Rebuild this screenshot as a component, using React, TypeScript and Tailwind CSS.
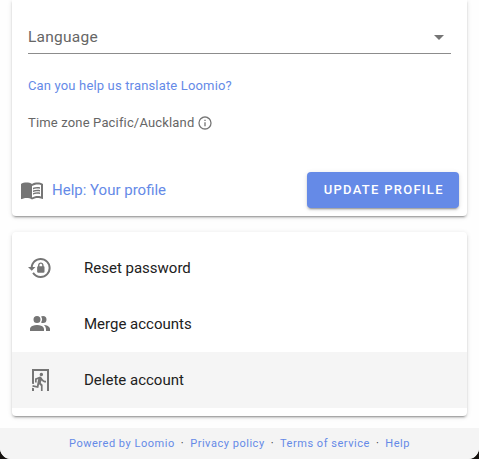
import React from "react";
import { MdMenuBook } from "react-icons/md";

function Icon({ d, className = "size-6" }: { d: string; className?: string }) {
  return (
    <svg viewBox="0 0 24 24" fill="currentColor" className={`shrink-0 ${className}`} aria-hidden="true">
      <path d={d} />
    </svg>
  );
}

const icons = {
  info: "M11,9H13V7H11M12,20C7.59,20 4,16.41 4,12C4,7.59 7.59,4 12,4C16.41,4 20,7.59 20,12C20,16.41 16.41,20 12,20M12,2A10,10 0 0,0 2,12A10,10 0 0,0 12,22A10,10 0 0,0 22,12A10,10 0 0,0 12,2M11,17H13V11H11V17Z",
  lockReset:
    "M12.63,2C18.16,2 22.64,6.5 22.64,12C22.64,17.5 18.16,22 12.63,22C9.12,22 6.05,20.18 4.26,17.43L5.84,16.18C7.25,18.47 9.76,20 12.64,20A8,8 0 0,0 20.64,12A8,8 0 0,0 12.64,4C8.56,4 5.2,7.06 4.71,11H7.47L3.73,14.73L0,11H2.69C3.19,5.95 7.45,2 12.63,2M15.59,10.24C16.09,10.25 16.5,10.65 16.5,11.16V15.77C16.5,16.27 16.09,16.69 15.58,16.69H10.05C9.54,16.69 9.13,16.27 9.13,15.77V11.16C9.13,10.65 9.54,10.25 10.04,10.24V9.23C10.04,7.7 11.29,6.46 12.81,6.46C14.34,6.46 15.59,7.7 15.59,9.23V10.24M12.81,7.86C12.06,7.86 11.44,8.47 11.44,9.23V10.24H14.19V9.23C14.19,8.47 13.57,7.86 12.81,7.86Z",
  accounts:
    "M16 17V19H2V17S2 13 9 13 16 17 16 17M12.5 7.5A3.5 3.5 0 1 0 9 11A3.5 3.5 0 0 0 12.5 7.5M15.94 13A5.32 5.32 0 0 1 18 17V19H22V17S22 13.37 15.94 13M15 4A3.39 3.39 0 0 0 13.07 4.59A5 5 0 0 1 13.07 10.41A3.39 3.39 0 0 0 15 11A3.5 3.5 0 0 0 15 4Z",
  exitRun:
    "M13.34,8.17C12.41,8.17 11.65,7.4 11.65,6.47A1.69,1.69 0 0,1 13.34,4.78C14.28,4.78 15.04,5.54 15.04,6.47C15.04,7.4 14.28,8.17 13.34,8.17M10.3,19.93L4.37,18.75L4.71,17.05L8.86,17.9L10.21,11.04L8.69,11.64V14.5H7V10.54L11.4,8.67L12.07,8.59C12.67,8.59 13.17,8.93 13.5,9.44L14.36,10.79C15.04,12 16.39,12.82 18,12.82V14.5C16.14,14.5 14.44,13.67 13.34,12.4L12.84,14.94L14.61,16.63V23H12.92V17.9L11.14,16.21L10.3,19.93M21,23H19V3H6V16.11L4,15.69V1H21V23M6,23H4V19.78L6,20.2V23Z",
};

const actions = [
  { label: "Reset password", icon: icons.lockReset, active: false },
  { label: "Merge accounts", icon: icons.accounts, active: false },
  { label: "Delete account", icon: icons.exitRun, active: true },
];

const links = ["Powered by Loomio", "Privacy policy", "Terms of service", "Help"];

const elevation =
  "shadow-[0_3px_1px_-2px_rgba(0,0,0,0.2),0_2px_2px_0_rgba(0,0,0,0.14),0_1px_5px_0_rgba(0,0,0,0.12)]";

export default function App() {
  return (
    <div className="h-[459px] w-[479px] overflow-hidden bg-[#15120f] font-[Roboto,sans-serif]">
      <div className="flex h-full flex-col overflow-hidden rounded-b-[11px] bg-[#fefefe]">
        <section className={`mx-3 flex h-[216px] shrink-0 flex-col rounded-b bg-white ${elevation}`}>
          <div className="mx-4 flex h-[54px] shrink-0 items-end justify-between border-b border-[#8c8c8c] pb-1">
            <span className="text-[15.5px] leading-6 tracking-[0.25px] text-[#666]">Language</span>
            <Icon d="M7,10L12,15L17,10H7Z" className="size-6 text-[#757575]" />
          </div>
          <a className="mx-4 mt-[21px] text-[13px] leading-5 tracking-[0.16px] text-[#658ae7]">
            <span className="relative top-px">Can you help us translate Loomio?</span>
          </a>
          <div className="mx-4 mt-[17px] flex items-center text-[13px] leading-5 tracking-[0.16px] text-[#666]">
            <span className="relative top-px">Time zone Pacific/Auckland</span>
            <Icon d={icons.info} className="ml-[3px] mt-px size-4 text-[#757575]" />
          </div>
          <div className="mt-10 flex h-9 items-center justify-between px-2">
            <a className="flex items-center gap-2 text-[15px] text-[#658ae7]">
              <MdMenuBook className="size-6 text-[#757575]" />
              <span>Help: Your profile</span>
            </a>
            <button
              className={`h-9 w-[152.5px] rounded bg-[#658ae7] pl-0.5 text-[13px] font-medium tracking-[1.28px] text-white ${elevation}`}
            >
              UPDATE PROFILE
            </button>
          </div>
        </section>

        <section className={`mx-3 mt-4 h-[184px] shrink-0 rounded bg-white py-2 ${elevation}`}>
          {actions.map((a) => (
            <div
              key={a.label}
              className={`flex h-14 items-center gap-8 px-4 text-[#212121] ${a.active ? "bg-[#f5f5f5]" : ""}`}
            >
              <Icon d={a.icon} className="size-6 text-[#757575]" />
              <span className="text-[15px]">{a.label}</span>
            </div>
          ))}
        </section>

        <footer className="mt-3 flex h-[31px] items-center justify-center bg-[#f4f4f4] pt-0.5 text-[11px] tracking-[0.53px] text-[#333]">
          {links.map((l, i) => (
            <React.Fragment key={l}>
              {i > 0 && <span className="px-1.5">·</span>}
              <a className="text-[#658ae7]">{l}</a>
            </React.Fragment>
          ))}
        </footer>
      </div>
    </div>
  );
}
